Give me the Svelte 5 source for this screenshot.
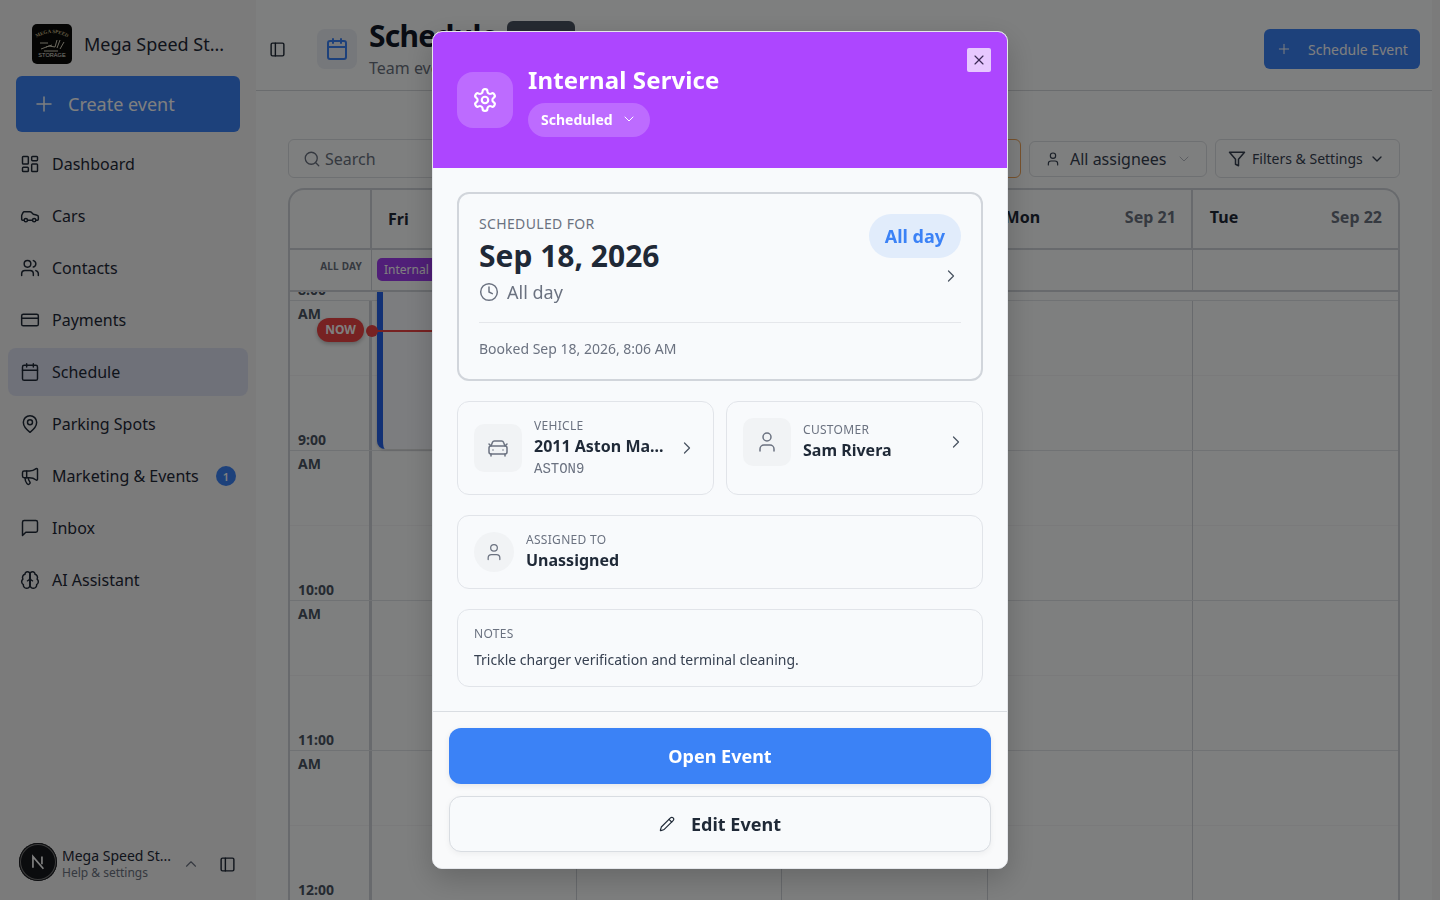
<script>
  const icons = {
    dashboard: '<rect width="7" height="9" x="3" y="3" rx="1"/><rect width="7" height="5" x="14" y="3" rx="1"/><rect width="7" height="9" x="14" y="12" rx="1"/><rect width="7" height="5" x="3" y="16" rx="1"/>',
    car: '<path d="M19 17h2c.6 0 1-.4 1-1v-3c0-.9-.7-1.7-1.5-1.9C18.7 10.6 16 10 16 10s-1.3-1.4-2.2-2.3c-.5-.4-1.1-.7-1.8-.7H5c-.6 0-1.1.4-1.4.9l-1.4 2.9A3.7 3.7 0 0 0 2 12v4c0 .6.4 1 1 1h2"/><circle cx="7" cy="17" r="2"/><path d="M9 17h6"/><circle cx="17" cy="17" r="2"/>',
    users: '<path d="M16 21v-2a4 4 0 0 0-4-4H6a4 4 0 0 0-4 4v2"/><circle cx="9" cy="7" r="4"/><path d="M22 21v-2a4 4 0 0 0-3-3.87"/><path d="M16 3.13a4 4 0 0 1 0 7.75"/>',
    card: '<rect width="20" height="14" x="2" y="5" rx="2"/><line x1="2" x2="22" y1="10" y2="10"/>',
    calendar: '<path d="M8 2v4"/><path d="M16 2v4"/><rect width="18" height="18" x="3" y="4" rx="2"/><path d="M3 10h18"/>',
    pin: '<path d="M20 10c0 6-8 12-8 12s-8-6-8-12a8 8 0 0 1 16 0Z"/><circle cx="12" cy="10" r="3"/>',
    megaphone: '<path d="M11 6a13 13 0 0 0 8.4-2.8A1 1 0 0 1 21 4v12a1 1 0 0 1-1.6.8A13 13 0 0 0 11 14H5a2 2 0 0 1-2-2V8a2 2 0 0 1 2-2z"/><path d="M6 14a12 12 0 0 0 2.4 7.2 2 2 0 0 0 3.2-2.4A8 8 0 0 1 10 14"/><path d="M8 6v8"/>',
    message: '<path d="M21 15a2 2 0 0 1-2 2H7l-4 4V5a2 2 0 0 1 2-2h14a2 2 0 0 1 2 2z"/>',
    brain: '<path d="M12 5a3 3 0 1 0-5.997.125 4 4 0 0 0-2.526 5.77 4 4 0 0 0 .556 6.588A4 4 0 1 0 12 18Z"/><path d="M12 5a3 3 0 1 1 5.997.125 4 4 0 0 1 2.526 5.77 4 4 0 0 1-.556 6.588A4 4 0 1 1 12 18Z"/><path d="M15 13a4.5 4.5 0 0 1-3-4 4.5 4.5 0 0 1-3 4"/><path d="M12 18V5"/>',
    panel: '<rect width="18" height="18" x="3" y="3" rx="2"/><path d="M9 3v18"/>',
    plus: '<path d="M5 12h14"/><path d="M12 5v14"/>',
    search: '<circle cx="11" cy="11" r="8"/><path d="m21 21-4.3-4.3"/>',
    user: '<path d="M19 21v-2a4 4 0 0 0-4-4H9a4 4 0 0 0-4 4v2"/><circle cx="12" cy="7" r="4"/>',
    funnel: '<polygon points="22 3 2 3 10 12.46 10 19 14 21 14 12.46 22 3"/>',
    down: '<path d="m6 9 6 6 6-6"/>',
    up: '<path d="m18 15-6-6-6 6"/>',
    right: '<path d="m9 18 6-6-6-6"/>',
    close: '<path d="M18 6 6 18"/><path d="m6 6 12 12"/>',
    gear: '<path d="M12.22 2h-.44a2 2 0 0 0-2 2v.18a2 2 0 0 1-1 1.73l-.43.25a2 2 0 0 1-2 0l-.15-.08a2 2 0 0 0-2.73.73l-.22.38a2 2 0 0 0 .73 2.73l.15.1a2 2 0 0 1 1 1.72v.51a2 2 0 0 1-1 1.74l-.15.09a2 2 0 0 0-.73 2.73l.22.38a2 2 0 0 0 2.73.73l.15-.08a2 2 0 0 1 2 0l.43.25a2 2 0 0 1 1 1.73V20a2 2 0 0 0 2 2h.44a2 2 0 0 0 2-2v-.18a2 2 0 0 1 1-1.73l.43-.25a2 2 0 0 1 2 0l.15.08a2 2 0 0 0 2.73-.73l.22-.39a2 2 0 0 0-.73-2.73l-.15-.08a2 2 0 0 1-1-1.74v-.5a2 2 0 0 1 1-1.74l.15-.09a2 2 0 0 0 .73-2.73l-.22-.38a2 2 0 0 0-2.73-.73l-.15.08a2 2 0 0 1-2 0l-.43-.25a2 2 0 0 1-1-1.73V4a2 2 0 0 0-2-2z"/><circle cx="12" cy="12" r="3"/>',
    clock: '<circle cx="12" cy="12" r="10"/><polyline points="12 6 12 12 16 14"/>',
    carFront: '<path d="m21 8-2 2-1.5-3.7A2 2 0 0 0 15.646 5H8.4a2 2 0 0 0-1.903 1.257L5 10 3 8"/><path d="M7 14h.01"/><path d="M17 14h.01"/><rect width="18" height="8" x="3" y="10" rx="2"/><path d="M5 18v2"/><path d="M19 18v2"/>',
    pencil: '<path d="M21.174 6.812a1 1 0 0 0-3.986-3.987L3.842 16.174a2 2 0 0 0-.5.83l-1.321 4.352a.5.5 0 0 0 .623.622l4.353-1.32a2 2 0 0 0 .83-.497z"/><path d="m15 5 4 4"/>'
  };

  const nav = [
    { label: 'Dashboard', icon: 'dashboard' },
    { label: 'Cars', icon: 'car' },
    { label: 'Contacts', icon: 'users' },
    { label: 'Payments', icon: 'card' },
    { label: 'Schedule', icon: 'calendar', active: true },
    { label: 'Parking Spots', icon: 'pin' },
    { label: 'Marketing & Events', icon: 'megaphone', badge: 1 },
    { label: 'Inbox', icon: 'message' },
    { label: 'AI Assistant', icon: 'brain' }
  ];

  const days = [
    { name: 'Fri', date: 'Sep 18' },
    { name: 'Sat', date: 'Sep 19' },
    { name: 'Sun', date: 'Sep 20' },
    { name: 'Mon', date: 'Sep 21' },
    { name: 'Tue', date: 'Sep 22' }
  ];

  const hours = ['8:00', '9:00', '10:00', '11:00', '12:00'];
</script>

{#snippet icon(name, size = 20, width = 2)}
  <svg class="icon" width={size} height={size} viewBox="0 0 24 24" fill="none" stroke="currentColor" stroke-width={width} stroke-linecap="round" stroke-linejoin="round">{@html icons[name]}</svg>
{/snippet}

<div class="app">
  <aside class="sidebar">
    <div class="brand">
      <svg class="logo" width="40" height="40" viewBox="0 0 40 40">
        <rect width="40" height="40" rx="5" fill="#0a0a08" />
        <path id="logo-arc" d="M4 14Q20 4 36 14" fill="none" />
        <text font-size="5" font-weight="700" fill="#c9b98a" font-family="Liberation Serif, serif" text-anchor="middle"><textPath href="#logo-arc" startOffset="50%">MEGA SPEED</textPath></text>
        <path d="M8 19h8M9 25l8-3 6 1 2-7M25 24l3-8M28 25l4-7M12 27h14M14 23l6-2" stroke="#d8d2bd" stroke-width="1" fill="none" />
        <text x="20" y="32.5" text-anchor="middle" font-size="5.6" fill="#efece2" font-family="Liberation Sans, sans-serif">STORAGE</text>
      </svg>
      <span class="brand-name">Mega Speed St...</span>
    </div>

    <button class="create">
      {@render icon('plus', 24, 1.5)}
      <span>Create event</span>
    </button>

    <nav>
      {#each nav as item}
        <div class="nav-item" class:active={item.active}>
          {@render icon(item.icon, 20, 1.75)}
          <span>{item.label}</span>
          {#if item.badge}<b class="badge">{item.badge}</b>{/if}
        </div>
      {/each}
    </nav>

    <div class="account">
      <div class="avatar">
        <svg width="18" height="18" viewBox="0 0 16 16" fill="none" stroke="#fff" stroke-width="1.5">
          <path d="M3.5 13V3.2L12.8 14" />
          <path d="M11.5 3v7" />
        </svg>
      </div>
      <div class="account-text">
        <span class="account-name">Mega Speed St...</span>
        <span class="account-sub">Help &amp; settings</span>
      </div>
      <span class="account-up">{@render icon('up', 18, 1.5)}</span>
      <span class="account-panel">{@render icon('panel', 17, 2)}</span>
    </div>
  </aside>

  <main>
    <header class="topbar">
      <span class="toggle">{@render icon('panel', 17, 2)}</span>
      <div class="page-icon">{@render icon('calendar', 24, 2)}</div>
      <div class="page-title">
        <div class="title-row">
          <h1>Schedule</h1>
          <span class="title-pill"></span>
        </div>
        <p>Team events and appointments</p>
      </div>
      <button class="schedule-btn">
        {@render icon('plus', 16, 1.5)}
        <span>Schedule Event</span>
      </button>
    </header>

    <section class="content">
      <div class="toolbar">
        <div class="search">
          {@render icon('search', 18, 1.75)}
          <span>Search</span>
        </div>
        <div class="type-filter"></div>
        <div class="assignees">
          {@render icon('user', 16, 1.75)}
          <span>All assignees</span>
          <span class="muted-chevron">{@render icon('down', 16, 1.5)}</span>
        </div>
        <div class="filters">
          {@render icon('funnel', 18, 2)}
          <span>Filters &amp; Settings</span>
          {@render icon('down', 16, 2)}
        </div>
      </div>

      <div class="calendar">
        <div class="head-row">
          <div class="corner"></div>
          {#each days as d, i}
            <div class="day-head" class:first={i === 0}>
              <strong>{d.name}</strong>
              <span>{d.date}</span>
            </div>
          {/each}
        </div>

        <div class="allday-row">
          <div class="allday-label">ALL DAY</div>
          {#each days as d, i}
            <div class="allday-cell">
              {#if i === 0}<div class="allday-event">Internal Service</div>{/if}
            </div>
          {/each}
        </div>

        <div class="grid-body">
          <div class="hours">
            {#each hours as h}
              <div class="hour-row">
                <div class="time-cell">
                  <span class="time-label">{h}<br />AM</span>
                </div>
                {#each days as d}
                  <div class="slot"></div>
                {/each}
              </div>
            {/each}
          </div>
          <div class="block-event"></div>
          <div class="now-line"></div>
          <div class="now-dot"></div>
          <div class="now-pill">NOW</div>
        </div>
      </div>
    </section>
  </main>
</div>

<div class="overlay">
  <div class="modal">
    <div class="modal-head">
      <div class="head-icon">{@render icon('gear', 26, 2)}</div>
      <div>
        <h2>Internal Service</h2>
        <div class="status">Scheduled {@render icon('down', 16, 1.5)}</div>
      </div>
      <button class="close">{@render icon('close', 16, 1.75)}</button>
    </div>

    <div class="modal-body">
      <div class="time-card">
        <div class="time-top">
          <div>
            <div class="label big">SCHEDULED FOR</div>
            <div class="date">Sep 18, 2026</div>
            <div class="time-line">{@render icon('clock', 20, 1.75)} All day</div>
          </div>
          <div class="time-side">
            <span class="allday-pill">All day</span>
            <span class="side-chevron">{@render icon('right', 20, 1.5)}</span>
          </div>
        </div>
        <div class="booked">Booked Sep 18, 2026, 8:06 AM</div>
      </div>

      <div class="pair">
        <div class="info-card center">
          <div class="tile">{@render icon('carFront', 24, 1.5)}</div>
          <div class="info-text">
            <div class="label">VEHICLE</div>
            <div class="value">2011 Aston Ma...</div>
            <div class="plate">ASTON9</div>
          </div>
          <span class="chev">{@render icon('right', 20, 1.5)}</span>
        </div>
        <div class="info-card customer">
          <div class="tile">{@render icon('user', 24, 1.5)}</div>
          <div class="info-text">
            <div class="label">CUSTOMER</div>
            <div class="value">Sam Rivera</div>
          </div>
          <span class="chev">{@render icon('right', 20, 1.5)}</span>
        </div>
      </div>

      <div class="info-card assigned">
        <div class="tile round">{@render icon('user', 20, 1.5)}</div>
        <div class="info-text">
          <div class="label">ASSIGNED TO</div>
          <div class="value">Unassigned</div>
        </div>
      </div>

      <div class="info-card notes">
        <div class="label">NOTES</div>
        <p>Trickle charger verification and terminal cleaning.</p>
      </div>
    </div>

    <div class="modal-foot">
      <button class="primary">Open Event</button>
      <button class="secondary">{@render icon('pencil', 16, 1.75)} Edit Event</button>
    </div>
  </div>
</div>

<style>
  :global(body) {
    margin: 0;
    font-family: "Noto Sans", sans-serif;
    color: #1f2937;
    overflow: hidden;
  }

  button {
    font-family: inherit;
    border: none;
    cursor: pointer;
  }

  .icon {
    display: block;
    flex-shrink: 0;
  }

  .app {
    display: flex;
    width: 1440px;
    height: 900px;
    background: #f6f7f7;
    overflow: hidden;
  }

  .sidebar {
    width: 256px;
    height: 900px;
    flex-shrink: 0;
    display: flex;
    flex-direction: column;
    background: #f6f6f6;
    box-sizing: border-box;
  }

  .brand {
    display: flex;
    align-items: center;
    gap: 12px;
    padding: 24px 32px 12px;
  }

  .logo {
    display: block;
    flex-shrink: 0;
  }

  .brand-name {
    font-size: 18px;
    line-height: 28px;
    white-space: nowrap;
    color: #1f2937;
  }

  .create {
    display: flex;
    align-items: center;
    gap: 12px;
    height: 56px;
    margin: 0 16px;
    padding: 0 16px;
    border-radius: 6px;
    background: #3b82f6;
    color: #fff;
    font-size: 18px;
  }

  nav {
    display: flex;
    flex-direction: column;
    gap: 4px;
    padding: 8px 8px 0;
  }

  .nav-item {
    display: flex;
    align-items: center;
    gap: 12px;
    height: 48px;
    padding: 0 12px;
    border-radius: 8px;
    font-size: 16px;
    color: #1f2937;
  }

  .nav-item.active {
    background: #dfe3f3;
  }

  .badge {
    width: 20px;
    height: 20px;
    margin-left: auto;
    border-radius: 50%;
    background: #3b82f6;
    color: #fff;
    font-size: 11px;
    font-weight: 600;
    display: flex;
    align-items: center;
    justify-content: center;
  }

  .account {
    margin-top: auto;
    display: flex;
    align-items: center;
    padding: 0 20px 19px 19px;
  }

  .avatar {
    width: 38px;
    height: 38px;
    box-sizing: border-box;
    border-radius: 50%;
    background: #16181d;
    box-shadow: inset 0 0 0 1px #16181d, inset 0 0 0 2px #777;
    display: flex;
    align-items: center;
    justify-content: center;
    flex-shrink: 0;
  }

  .account-text {
    display: flex;
    flex-direction: column;
    margin: 4px 0 0 5px;
    width: 123px;
  }

  .account-name {
    font-size: 14px;
    line-height: 18px;
    white-space: nowrap;
  }

  .account-sub {
    font-size: 12px;
    line-height: 16px;
    color: #6b7280;
  }

  .account-up {
    color: #6b7280;
    margin-top: 4px;
  }

  .account-panel {
    margin: 4px 0 0 19px;
  }

  main {
    width: 1176px;
    height: 900px;
    flex-shrink: 0;
    background: #fdffff;
    display: flex;
    flex-direction: column;
  }

  .topbar {
    height: 91px;
    box-sizing: border-box;
    border-bottom: 1px solid #d5d8dc;
    display: flex;
    align-items: center;
    padding: 8px 12px 0 13px;
    flex-shrink: 0;
  }

  .toggle {
    width: 17px;
  }

  .page-icon {
    margin-left: 31px;
    width: 40px;
    height: 40px;
    border-radius: 8px;
    background: #ecf0f7;
    color: #3b82f6;
    display: flex;
    align-items: center;
    justify-content: center;
  }

  .page-title {
    margin-left: 12px;
    margin-top: -2px;
  }

  .title-row {
    display: flex;
    align-items: flex-start;
    gap: 9px;
  }

  h1 {
    margin: 0;
    font-size: 30px;
    line-height: 40px;
    font-weight: 700;
    letter-spacing: -0.025em;
    color: #111827;
  }

  .title-pill {
    display: block;
    width: 68px;
    height: 24px;
    margin-top: 5px;
    border-radius: 6px;
    background: #4b5563;
  }

  .page-title p {
    margin: 0;
    font-size: 16px;
    line-height: 24px;
    color: #6b7280;
  }

  .schedule-btn {
    margin-left: auto;
    width: 156px;
    height: 40px;
    border-radius: 6px;
    background: #3b82f6;
    color: #fff;
    font-size: 14px;
    white-space: nowrap;
    display: flex;
    align-items: center;
    gap: 16px;
    padding: 0 12px;
  }

  .content {
    padding: 48px 32px 0;
    display: flex;
    flex-direction: column;
    flex: 1;
    min-height: 0;
  }

  .toolbar {
    display: flex;
    align-items: center;
    height: 39px;
    gap: 8px;
    flex-shrink: 0;
  }

  .search {
    width: 281px;
    height: 39px;
    box-sizing: border-box;
    border: 1px solid #dde0e4;
    border-radius: 6px;
    display: flex;
    align-items: center;
    gap: 4px;
    padding: 0 14px;
    color: #6b7280;
    font-size: 16px;
  }

  .type-filter {
    flex: 1;
    height: 39px;
    box-sizing: border-box;
    border: 1px solid #f2a65a;
    border-radius: 6px;
  }

  .assignees {
    width: 178px;
    height: 36px;
    box-sizing: border-box;
    border: 1px solid #dde0e4;
    border-radius: 6px;
    display: flex;
    align-items: center;
    gap: 9px;
    padding: 0 15px;
    font-size: 16px;
    color: #374151;
    white-space: nowrap;
  }

  .muted-chevron {
    margin-left: auto;
    color: #b8bcc4;
  }

  .filters {
    width: 185px;
    height: 39px;
    box-sizing: border-box;
    border: 1px solid #dde0e4;
    border-radius: 6px;
    display: flex;
    align-items: center;
    gap: 6px;
    padding: 0 15px 0 12px;
    font-size: 14px;
    color: #374151;
    white-space: nowrap;
  }

  .filters span {
    margin-right: auto;
  }

  .calendar {
    margin-top: 10px;
    width: 1112px;
    flex: 1;
    min-height: 0;
    box-sizing: border-box;
    border: 2px solid #d1d5db;
    border-bottom: none;
    border-radius: 16px 16px 0 0;
    overflow: hidden;
    display: flex;
    flex-direction: column;
  }

  .head-row,
  .allday-row,
  .hour-row {
    display: grid;
    grid-template-columns: 82px repeat(5, 1fr);
  }

  .head-row {
    height: 58px;
    flex-shrink: 0;
    border-bottom: 2px solid #d1d5db;
    box-sizing: content-box;
  }

  .corner {
    border-right: 2px solid #d1d5db;
  }

  .day-head {
    display: flex;
    align-items: center;
    justify-content: space-between;
    padding: 0 15px 4px 17px;
    border-right: 2px solid #d1d5db;
    font-size: 16px;
  }

  .day-head.first {
    padding: 0 15px 0 16px;
  }

  .day-head:last-child {
    border-right: none;
    padding-right: 16px;
  }

  .day-head strong {
    font-weight: 700;
    color: #1f2937;
  }

  .day-head span {
    font-weight: 700;
    color: #6b7280;
  }

  .allday-row {
    height: 40px;
    flex-shrink: 0;
    border-bottom: 2px solid #d1d5db;
  }

  .allday-label {
    border-right: 1px solid #d1d5db;
    font-size: 10px;
    font-weight: 700;
    color: #6b7280;
    text-align: right;
    padding: 9px 9px 0 0;
    letter-spacing: 0.02em;
  }

  .allday-cell {
    border-right: 1px solid #d1d5db;
    padding: 8px 5px;
  }

  .allday-cell:last-child {
    border-right: none;
  }

  .allday-event {
    height: 23px;
    line-height: 23px;
    border-radius: 5px;
    background: #a03df0;
    color: #fff;
    font-size: 12px;
    padding: 0 7px;
    white-space: nowrap;
    overflow: hidden;
  }

  .grid-body {
    position: relative;
    flex: 1;
    min-height: 0;
    overflow: hidden;
    padding-top: 8px;
  }

  .hour-row {
    height: 150px;
    border-top: 1px solid #e1e4e8;
    box-sizing: border-box;
  }

  .time-cell {
    border-right: 3px solid #d1d5db;
    position: relative;
    background: linear-gradient(#f4f5f7, #f4f5f7) 0 74px / 100% 1px no-repeat;
  }

  .time-label {
    position: absolute;
    left: 8px;
    top: -23px;
    font-size: 14px;
    line-height: 24px;
    font-weight: 700;
    color: #4b5563;
  }

  .slot {
    border-right: 1px solid #d1d5db;
    background: linear-gradient(#f4f5f7, #f4f5f7) 0 74px / 100% 1px no-repeat;
  }

  .slot:last-child {
    border-right: none;
  }

  .block-event {
    position: absolute;
    left: 87px;
    top: 0;
    width: 194px;
    height: 157px;
    box-sizing: border-box;
    border-left: 6px solid #2563eb;
    border-radius: 0 0 8px 8px;
    background: #f8fbff;
    box-shadow: 0 1px 3px rgba(0, 0, 0, 0.2);
  }

  .now-line {
    position: absolute;
    left: 82px;
    top: 38px;
    width: 205px;
    height: 2px;
    background: #ef4444;
  }

  .now-dot {
    position: absolute;
    left: 76px;
    top: 33px;
    width: 12px;
    height: 12px;
    border-radius: 50%;
    background: #ef4444;
  }

  .now-pill {
    position: absolute;
    left: 27px;
    top: 26px;
    width: 47px;
    height: 24px;
    border-radius: 12px;
    background: #ef4444;
    color: #fff;
    font-size: 12px;
    font-weight: 700;
    line-height: 24px;
    text-align: center;
    box-shadow: 0 2px 4px rgba(0, 0, 0, 0.25);
  }

  .overlay {
    position: fixed;
    inset: 0;
    background: rgba(0, 0, 0, 0.5);
    display: flex;
    align-items: center;
    justify-content: center;
  }

  .modal {
    width: 576px;
    height: 838px;
    box-sizing: border-box;
    border: 1px solid #e5e7eb;
    border-radius: 10px;
    background: #f8fafc;
    overflow: hidden;
    display: flex;
    flex-direction: column;
    box-shadow: 0 10px 30px rgba(0, 0, 0, 0.2);
  }

  .modal-head {
    position: relative;
    height: 136px;
    flex-shrink: 0;
    background: #ad46ff;
    color: #fff;
    display: flex;
    gap: 16px;
    padding: 32px 24px 0;
    box-sizing: border-box;
  }

  .head-icon {
    width: 56px;
    height: 56px;
    margin-top: 8px;
    border-radius: 16px;
    background: rgba(255, 255, 255, 0.2);
    display: flex;
    align-items: center;
    justify-content: center;
  }

  h2 {
    margin: 0 0 0 -1px;
    font-size: 24px;
    line-height: 32px;
    font-weight: 700;
    letter-spacing: 0.005em;
  }

  .status {
    margin: 7px 0 0 -1px;
    width: 122px;
    height: 34px;
    box-sizing: border-box;
    border-radius: 17px;
    background: rgba(255, 255, 255, 0.2);
    font-size: 14px;
    font-weight: 700;
    display: flex;
    align-items: center;
    gap: 8px;
    padding: 0 13px 2px;
  }

  .close {
    position: absolute;
    top: 16px;
    right: 16px;
    width: 24px;
    height: 24px;
    padding: 0;
    border-radius: 2px;
    background: rgba(255, 255, 255, 0.7);
    color: #3b2a55;
    display: flex;
    align-items: center;
    justify-content: center;
  }

  .modal-body {
    flex: 1;
    padding: 24px 24px 0;
    display: flex;
    flex-direction: column;
    gap: 20px;
  }

  .time-card {
    height: 189px;
    box-sizing: border-box;
    border: 2px solid #d1d5db;
    border-radius: 12px;
    padding: 20px;
    background: #f8fafc;
  }

  .time-top {
    display: flex;
    justify-content: space-between;
    height: 108px;
    border-bottom: 1px solid #e5e7eb;
  }

  .label {
    font-size: 12px;
    line-height: 16px;
    letter-spacing: 0.025em;
    color: #6b7280;
  }

  .label.big {
    font-size: 14px;
    line-height: 20px;
  }

  .date {
    font-size: 30px;
    line-height: 36px;
    font-weight: 700;
    color: #1f2937;
    margin-top: 4px;
  }

  .time-line {
    display: flex;
    align-items: center;
    gap: 8px;
    margin-top: 4px;
    font-size: 18px;
    line-height: 28px;
    color: #6b7280;
  }

  .time-side {
    display: flex;
    flex-direction: column;
    align-items: flex-end;
    gap: 8px;
  }

  .allday-pill {
    padding: 0 16px;
    height: 44px;
    line-height: 44px;
    border-radius: 22px;
    background: #e1ecfb;
    color: #3b82f6;
    font-size: 18px;
    font-weight: 700;
  }

  .side-chevron {
    color: #4b5563;
  }

  .booked {
    margin-top: 16px;
    font-size: 14px;
    line-height: 20px;
    color: #6b7280;
  }

  .pair {
    display: grid;
    grid-template-columns: 1fr 1fr;
    gap: 12px;
    height: 94px;
  }

  .info-card {
    box-sizing: border-box;
    border: 1px solid #e1e4e9;
    border-radius: 12px;
    padding: 16px;
    display: flex;
    align-items: flex-start;
    gap: 12px;
    background: #f8fafc;
  }

  .info-card.center {
    align-items: center;
  }

  .tile {
    width: 48px;
    height: 48px;
    border-radius: 10px;
    background: #f1f3f5;
    color: #6b7280;
    display: flex;
    align-items: center;
    justify-content: center;
    flex-shrink: 0;
  }

  .tile.round {
    width: 40px;
    height: 40px;
    border-radius: 50%;
  }

  .info-text {
    flex: 1;
    min-width: 0;
  }

  .value {
    font-size: 16px;
    line-height: 24px;
    font-weight: 700;
    color: #1f2937;
    white-space: nowrap;
  }

  .plate {
    font-family: "Liberation Mono", monospace;
    font-size: 14px;
    line-height: 20px;
    margin: 1px 0 -1px;
    color: #6b7280;
  }

  .chev {
    color: #4b5563;
    align-self: center;
  }

  .customer .info-text {
    padding-top: 4px;
  }

  .customer .chev {
    align-self: flex-start;
    margin-top: 14px;
  }

  .assigned {
    height: 74px;
    align-items: center;
  }

  .notes {
    height: 78px;
    display: block;
  }

  .notes p {
    margin: 8px 0 0;
    font-size: 14px;
    line-height: 20px;
    color: #374151;
  }

  .modal-foot {
    border-top: 1px solid #d9dde2;
    background: #f9fafb;
    padding: 16px;
    display: flex;
    flex-direction: column;
    gap: 12px;
    flex-shrink: 0;
  }

  .primary,
  .secondary {
    height: 56px;
    border-radius: 12px;
    font-size: 18px;
    font-weight: 700;
    display: flex;
    align-items: center;
    justify-content: center;
  }

  .primary {
    background: #3b82f6;
    color: #fff;
    box-shadow: 0 2px 6px rgba(0, 0, 0, 0.08);
  }

  .secondary {
    gap: 16px;
    background: #f8fafc;
    border: 1px solid #d9dde2;
    color: #1f2937;
    box-shadow: 0 2px 6px rgba(0, 0, 0, 0.05);
  }
</style>
